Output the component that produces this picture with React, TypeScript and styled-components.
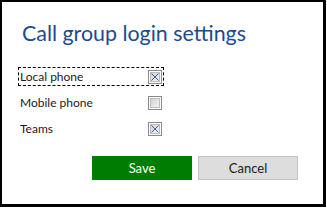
import React, { useState } from 'react'
import styled, { createGlobalStyle } from 'styled-components'

const GlobalStyle = createGlobalStyle`
  html, body {
    margin: 0;
    padding: 0;
    background: #ffffff;
  }

  body {
    font-family: 'Lato', 'Noto Sans', sans-serif;
  }
`

const Dialog = styled.div`
  box-sizing: border-box;
  width: 326px;
  height: 207px;
  border: 2px solid #000000;
  border-right-width: 3px;
  border-bottom-width: 3px;
  background: #ffffff;
  padding: 16px 25px 0 16px;
  display: flex;
  flex-direction: column;
`

const Title = styled.h1`
  margin: 0;
  padding-left: 4px;
  font-family: 'Lato', 'Noto Sans', sans-serif;
  font-weight: 400;
  font-size: 21.4px;
  line-height: 30px;
  color: #1b4c8c;
`

const Options = styled.div`
  display: flex;
  flex-direction: column;
  gap: 7px;
  margin-top: 19px;
`

const Row = styled.label<{ $focused?: boolean }>`
  box-sizing: border-box;
  width: 146px;
  height: 19px;
  display: flex;
  align-items: center;
  justify-content: space-between;
  padding: 0 1px 0 1px;
  border: 1px dashed ${(p) => (p.$focused ? '#000000' : 'transparent')};
  font-size: 12px;
  color: #1a1a1a;
  cursor: default;
`

const Box = styled.span`
  box-sizing: border-box;
  width: 14px;
  height: 14px;
  border: 1px solid #8a8a8a;
  padding: 1px;
  display: flex;
  background: #ffffff;
`

const BoxInner = styled.span`
  box-sizing: border-box;
  flex: 1;
  border: 1px solid #bdbdbd;
  background: linear-gradient(135deg, #d4d4d4 0%, #f2f2f2 100%);
  display: flex;
`

const Buttons = styled.div`
  display: flex;
  justify-content: flex-end;
  gap: 6px;
  margin-top: 18px;
`

const Button = styled.button<{ $primary?: boolean }>`
  box-sizing: border-box;
  width: 100px;
  height: 24px;
  font-family: 'Lato', 'Noto Sans', sans-serif;
  font-size: 13px;
  border: 1px solid ${(p) => (p.$primary ? '#007d00' : '#c3c3c3')};
  background: ${(p) => (p.$primary ? '#007d00' : '#dddddd')};
  color: ${(p) => (p.$primary ? '#ffffff' : '#1a1a1a')};
  padding: 0;
`

const Check = ({ checked }: { checked: boolean }) => (
  <Box>
    <BoxInner>
      {checked && (
        <svg width="8" height="8" viewBox="0 0 8 8">
          <path d="M0.5 0.5 L7.5 7.5 M7.5 0.5 L0.5 7.5" stroke="#3c58a6" strokeWidth="1" />
        </svg>
      )}
    </BoxInner>
  </Box>
)

const App = () => {
  const [opts, setOpts] = useState([
    { label: 'Local phone', checked: true },
    { label: 'Mobile phone', checked: false },
    { label: 'Teams', checked: true }
  ])

  const toggle = (i: number) =>
    setOpts(opts.map((o, j) => (j === i ? { ...o, checked: !o.checked } : o)))

  return (
    <>
      <GlobalStyle />
      <Dialog>
        <Title>Call group login settings</Title>
        <Options>
          {opts.map((o, i) => (
            <Row key={o.label} $focused={i === 0} onClick={() => toggle(i)}>
              <span>{o.label}</span>
              <Check checked={o.checked} />
            </Row>
          ))}
        </Options>
        <Buttons>
          <Button $primary>Save</Button>
          <Button>Cancel</Button>
        </Buttons>
      </Dialog>
    </>
  )
}

export default App
